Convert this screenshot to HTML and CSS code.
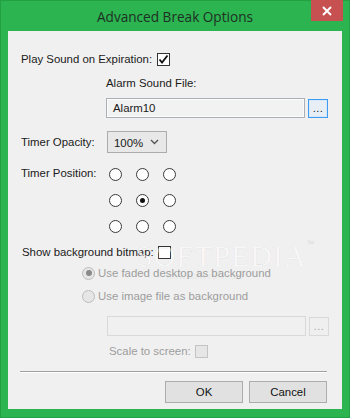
FILE: index.html
```html
<!DOCTYPE html>
<html>
<head>
<meta charset="utf-8">
<link rel="stylesheet" href="styles.css">
</head>
<body>
<div class="window">
  <div class="titlebar">
    <div class="title">Advanced Break Options</div>
    <div class="close">
      <svg width="10" height="10" viewBox="0 0 10 10"><path d="M1 1 L9 9 M9 1 L1 9" stroke="#fff" stroke-width="2"/></svg>
    </div>
  </div>
  <div class="content">
    <div class="row r-play">
      <span class="label">Play Sound on Expiration:</span>
      <span class="check">
        <svg width="11" height="11" viewBox="0 0 11 11"><path d="M1.5 5.5 L4 8.5 L9.5 1.5" fill="none" stroke="#111" stroke-width="1.8"/></svg>
      </span>
    </div>
    <div class="row r-alarm-label indent">
      <span class="label">Alarm Sound File:</span>
    </div>
    <div class="row r-alarm indent">
      <div class="input">Alarm10</div>
      <div class="dots active">...</div>
    </div>
    <div class="row r-opacity">
      <span class="label fixed">Timer Opacity:</span>
      <div class="select">
        <span>100%</span>
        <svg width="9" height="6" viewBox="0 0 9 6"><path d="M1 1 L4.5 4.5 L8 1" fill="none" stroke="#555" stroke-width="1.4"/></svg>
      </div>
    </div>
    <div class="row r-position">
      <span class="label fixed pos-label">Timer Position:</span>
      <div class="grid">
        <span class="radio"></span><span class="radio"></span><span class="radio"></span>
        <span class="radio"></span><span class="radio on"></span><span class="radio"></span>
        <span class="radio"></span><span class="radio"></span><span class="radio"></span>
      </div>
    </div>
    <div class="row r-bitmap">
      <span class="label">Show background bitmap:</span>
      <span class="check"></span>
    </div>
    <div class="row r-faded disabled">
      <span class="radio dis on"></span>
      <span class="label">Use faded desktop as background</span>
    </div>
    <div class="row r-image disabled">
      <span class="radio dis"></span>
      <span class="label">Use image file as background</span>
    </div>
    <div class="row r-file">
      <div class="input dis-input"></div>
      <div class="dots dis-dots">...</div>
    </div>
    <div class="row r-scale disabled">
      <span class="label">Scale to screen:</span>
      <span class="check dis-check"></span>
    </div>
    <div class="separator"></div>
    <div class="row r-buttons">
      <div class="btn">OK</div>
      <div class="btn">Cancel</div>
    </div>
    <div class="watermark">SOFTPEDIA<sup>™</sup></div>
    <div class="watermark2">www.softpedia.com</div>
  </div>
</div>
</body>
</html>
```

FILE: styles.css
```css
* { box-sizing: border-box; }
html, body { margin: 0; padding: 0; }
body { width: 350px; height: 418px; overflow: hidden; }

.window {
  width: 350px;
  height: 418px;
  background: #2bb450;
  border: 1px solid #23a043;
  display: flex;
  flex-direction: column;
  font-family: "Liberation Sans", Arial, sans-serif;
  font-size: 11.4px;
  color: #1a1a1a;
}

.titlebar {
  height: 30px;
  display: grid;
  grid-template-columns: 1fr auto 1fr;
  align-items: start;
}
.title {
  grid-column: 2;
  font-family: "Open Sans", sans-serif;
  font-size: 13.6px;
  color: #1f2f24;
  line-height: 30px;
  padding-top: 1px;
}
.close {
  grid-column: 3;
  justify-self: end;
  margin-right: 6px;
  margin-top: -1px;
  width: 32px;
  height: 21px;
  background: #c75050;
  display: flex;
  align-items: center;
  justify-content: center;
}

.content {
  margin: 0 7px;
  height: 378px;
  background: #f0f0f0;
  position: relative;
  padding-left: 13px;
  display: flex;
  flex-direction: column;
}

.row { display: flex; align-items: center; }
.label { white-space: nowrap; line-height: 14px; }
.indent { padding-left: 85px; }

.check {
  width: 13px;
  height: 13px;
  border: 1px solid #333;
  background: #fff;
  margin-left: 5px;
  display: flex;
  align-items: center;
  justify-content: center;
}

.r-play { margin-top: 21px; height: 14px; }
.r-alarm-label { margin-top: 10px; height: 14px; }
.r-alarm { margin-top: 8px; height: 20px; }

.input {
  width: 199px;
  height: 20px;
  border: 1px solid #abb0b8;
  box-shadow: inset 0 0 0 1px #fbfbfb;
  background: #f2f2f2;
  padding-left: 6px;
  line-height: 18px;
}
.dots {
  width: 20px;
  height: 19px;
  margin-left: 3px;
  text-align: center;
  line-height: 17px;
  font-size: 11px;
  letter-spacing: 0.5px;
}
.dots.active {
  border: 1px solid #3d9bf2;
  background: #e8eef5;
  box-shadow: inset 0 0 0 1px #d6e8fb;
  color: #222;
}

.r-opacity { margin-top: 13px; height: 22px; }
.fixed { width: 86px; }
.select {
  width: 60px;
  height: 22px;
  border: 1px solid #acacac;
  background: #e8e8e8;
  display: flex;
  align-items: center;
  justify-content: space-between;
  padding: 0 7px 0 6px;
}
.select span { line-height: 14px; padding-top: 1px; }

.r-position { margin-top: 14px; align-items: flex-start; }
.pos-label { margin-top: -1px; width: 88px; }
.grid {
  display: grid;
  grid-template-columns: repeat(3, 13px);
  grid-auto-rows: 13px;
  column-gap: 14px;
  row-gap: 13px;
  margin-top: 1px;
}

.radio {
  width: 13px;
  height: 13px;
  border-radius: 50%;
  border: 1px solid #3a3a3a;
  background: #fff;
  display: flex;
  align-items: center;
  justify-content: center;
  flex: none;
}
.radio.on::after {
  content: "";
  width: 5px;
  height: 5px;
  border-radius: 50%;
  background: #111;
}

.r-bitmap { margin-top: 12px; height: 14px; padding-left: 1px; }
.r-bitmap .check { margin-left: 4px; }

.disabled { color: #9d9d9d; }
.r-faded { margin-top: 7px; height: 14px; padding-left: 61px; }
.r-image { margin-top: 9px; height: 14px; padding-left: 61px; }
.radio.dis {
  border-color: #bcbcbc;
  background: #e6e6e6;
  margin-right: 3px;
}
.radio.dis.on::after { background: #8a8a8a; width: 6px; height: 6px; }

.r-file { margin-top: 13px; height: 20px; padding-left: 86px; }
.dis-input {
  border-color: #d9d9d9;
  box-shadow: none;
  background: #f0f0f0;
}
.dis-dots {
  border: 1px solid #d9d9d9;
  background: #efefef;
  color: #a8a8a8;
}

.r-scale { margin-top: 8px; height: 14px; padding-left: 88px; }
.dis-check {
  border-color: #c4c4c4;
  background: #e6e6e6;
  margin-left: 4px;
}

.separator {
  margin-top: 13px;
  margin-left: -1px;
  width: 307px;
  height: 1px;
  background: #a0a0a0;
  border-bottom: 1px solid #fff;
  box-sizing: content-box;
}

.r-buttons { margin-top: 8px; padding-left: 144px; gap: 6px; }
.btn {
  width: 78px;
  height: 22px;
  border: 1px solid #adadad;
  background: #e1e1e1;
  text-align: center;
  line-height: 20px;
  color: #111;
}

.watermark {
  position: absolute;
  left: 128px;
  top: 208px;
  font-family: "Liberation Serif", serif;
  font-size: 30px;
  letter-spacing: 1px;
  color: rgba(255,255,255,0.55);
  -webkit-text-stroke: 0.6px rgba(0,0,0,0.08);
  pointer-events: none;
}
.watermark sup { font-size: 8px; vertical-align: top; }
.watermark2 {
  position: absolute;
  left: 158px;
  top: 240px;
  font-size: 9px;
  color: rgba(0,0,0,0.07);
}
```
